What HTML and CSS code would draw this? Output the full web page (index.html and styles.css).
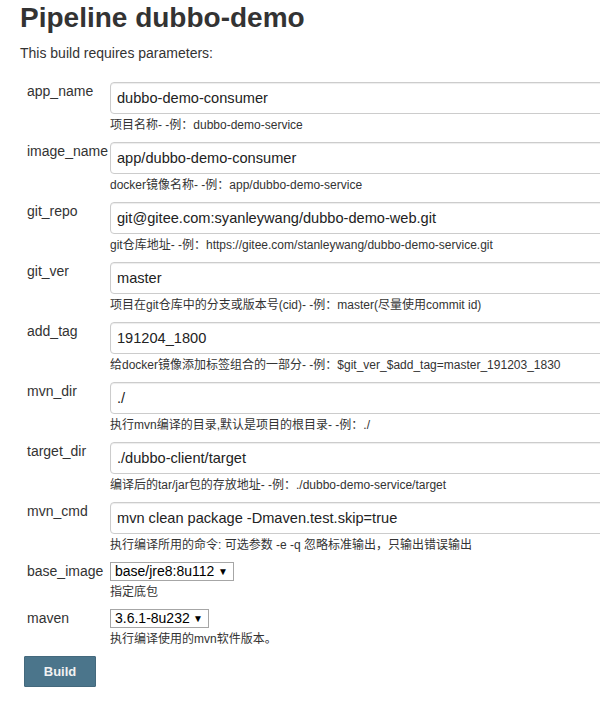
FILE: index.html
```html
<!DOCTYPE html>
<html lang="zh-CN">
<head>
    <meta charset="UTF-8">
    <meta name="viewport" content="width=device-width, initial-scale=1.0">
    <title>Pipeline dubbo-demo</title>
    <link rel="stylesheet" href="styles.css">
</head>
<body>
    <div class="main">
        <h1>Pipeline dubbo-demo</h1>
        <p class="intro">This build requires parameters:</p>

        <form class="params">
            <div class="param">
                <label class="param-name" for="app_name">app_name</label>
                <div class="param-field">
                    <input class="text-input" id="app_name" type="text" value="dubbo-demo-consumer">
                    <div class="help">项目名称- -例：dubbo-demo-service</div>
                </div>
            </div>

            <div class="param">
                <label class="param-name" for="image_name">image_name</label>
                <div class="param-field">
                    <input class="text-input" id="image_name" type="text" value="app/dubbo-demo-consumer">
                    <div class="help">docker镜像名称- -例：app/dubbo-demo-service</div>
                </div>
            </div>

            <div class="param">
                <label class="param-name" for="git_repo">git_repo</label>
                <div class="param-field">
                    <input class="text-input" id="git_repo" type="text" value="git@gitee.com:syanleywang/dubbo-demo-web.git">
                    <div class="help">git仓库地址- -例：https://gitee.com/stanleywang/dubbo-demo-service.git</div>
                </div>
            </div>

            <div class="param">
                <label class="param-name" for="git_ver">git_ver</label>
                <div class="param-field">
                    <input class="text-input" id="git_ver" type="text" value="master">
                    <div class="help">项目在git仓库中的分支或版本号(cid)- -例：master(尽量使用commit id)</div>
                </div>
            </div>

            <div class="param">
                <label class="param-name" for="add_tag">add_tag</label>
                <div class="param-field">
                    <input class="text-input" id="add_tag" type="text" value="191204_1800">
                    <div class="help">给docker镜像添加标签组合的一部分- -例：$git_ver_$add_tag=master_191203_1830</div>
                </div>
            </div>

            <div class="param">
                <label class="param-name" for="mvn_dir">mvn_dir</label>
                <div class="param-field">
                    <input class="text-input" id="mvn_dir" type="text" value="./">
                    <div class="help">执行mvn编译的目录,默认是项目的根目录- -例：./</div>
                </div>
            </div>

            <div class="param">
                <label class="param-name" for="target_dir">target_dir</label>
                <div class="param-field">
                    <input class="text-input" id="target_dir" type="text" value="./dubbo-client/target">
                    <div class="help">编译后的tar/jar包的存放地址- -例：./dubbo-demo-service/target</div>
                </div>
            </div>

            <div class="param">
                <label class="param-name" for="mvn_cmd">mvn_cmd</label>
                <div class="param-field">
                    <input class="text-input" id="mvn_cmd" type="text" value="mvn clean package -Dmaven.test.skip=true">
                    <div class="help">执行编译所用的命令: 可选参数 -e -q 忽略标准输出，只输出错误输出</div>
                </div>
            </div>

            <div class="param">
                <label class="param-name" for="base_image">base_image</label>
                <div class="param-field">
                    <span class="select-wrap">
                        <select class="choice" id="base_image">
                            <option>base/jre8:8u112</option>
                        </select>
                    </span>
                    <div class="help">指定底包</div>
                </div>
            </div>

            <div class="param">
                <label class="param-name" for="maven">maven</label>
                <div class="param-field">
                    <span class="select-wrap">
                        <select class="choice" id="maven">
                            <option>3.6.1-8u232</option>
                        </select>
                    </span>
                    <div class="help">执行编译使用的mvn软件版本。</div>
                </div>
            </div>

            <button class="build-btn" type="button">Build</button>
        </form>
    </div>
</body>
</html>
```

FILE: styles.css
```css
* {
    box-sizing: border-box;
}

body {
    margin: 0;
    overflow: hidden;
    background: #fff;
    color: #333;
    font-family: Arial, "Liberation Sans", "Noto Sans CJK SC", sans-serif;
    font-size: 14px;
}

.main {
    padding: 1px 0 0 20px;
}

h1 {
    margin: 0;
    font-size: 28px;
    line-height: 34px;
    font-weight: bold;
    color: #333;
}

.intro {
    margin: 8px 0 0;
    line-height: 20px;
}

.params {
    margin: 19px 0 0 7px;
}

.param {
    display: grid;
    grid-template-columns: 83px 1fr;
    margin-bottom: 9px;
}

.param-name {
    line-height: 16px;
    padding-top: 1px;
    color: #333;
}

.text-input {
    display: block;
    width: 520px;
    height: 32px;
    padding: 0 6px;
    border: 1px solid #ccc;
    border-radius: 4px;
    box-shadow: inset 0 1px 1px rgba(0,0,0,0.075);
    font-family: Arial, "Liberation Sans", sans-serif;
    font-size: 14.6px;
    color: #222;
}

.help {
    margin-top: 3px;
    line-height: 16px;
    font-size: 12px;
    color: #333;
    white-space: nowrap;
}

.select-wrap {
    position: relative;
    display: inline-block;
}

.select-wrap::after {
    content: "▼";
    position: absolute;
    right: 6px;
    top: 4px;
    font-size: 10px;
    color: #000;
    pointer-events: none;
}

.choice {
    -webkit-appearance: none;
    appearance: none;
    height: 19px;
    padding: 0 18px 0 4px;
    border: 1px solid #a6a6a6;
    border-radius: 0;
    background: #fff;
    font-family: Arial, "Liberation Sans", sans-serif;
    font-size: 14px;
    line-height: 17px;
    color: #000;
}

.build-btn {
    display: block;
    margin-left: -3px;
    width: 72px;
    height: 31px;
    border: 1px solid #44697d;
    border-radius: 1px;
    background-color: #4b758b;
    color: #f2f2f2;
    font-family: Arial, "Liberation Sans", sans-serif;
    font-size: 13px;
    font-weight: bold;
    cursor: pointer;
}
```
